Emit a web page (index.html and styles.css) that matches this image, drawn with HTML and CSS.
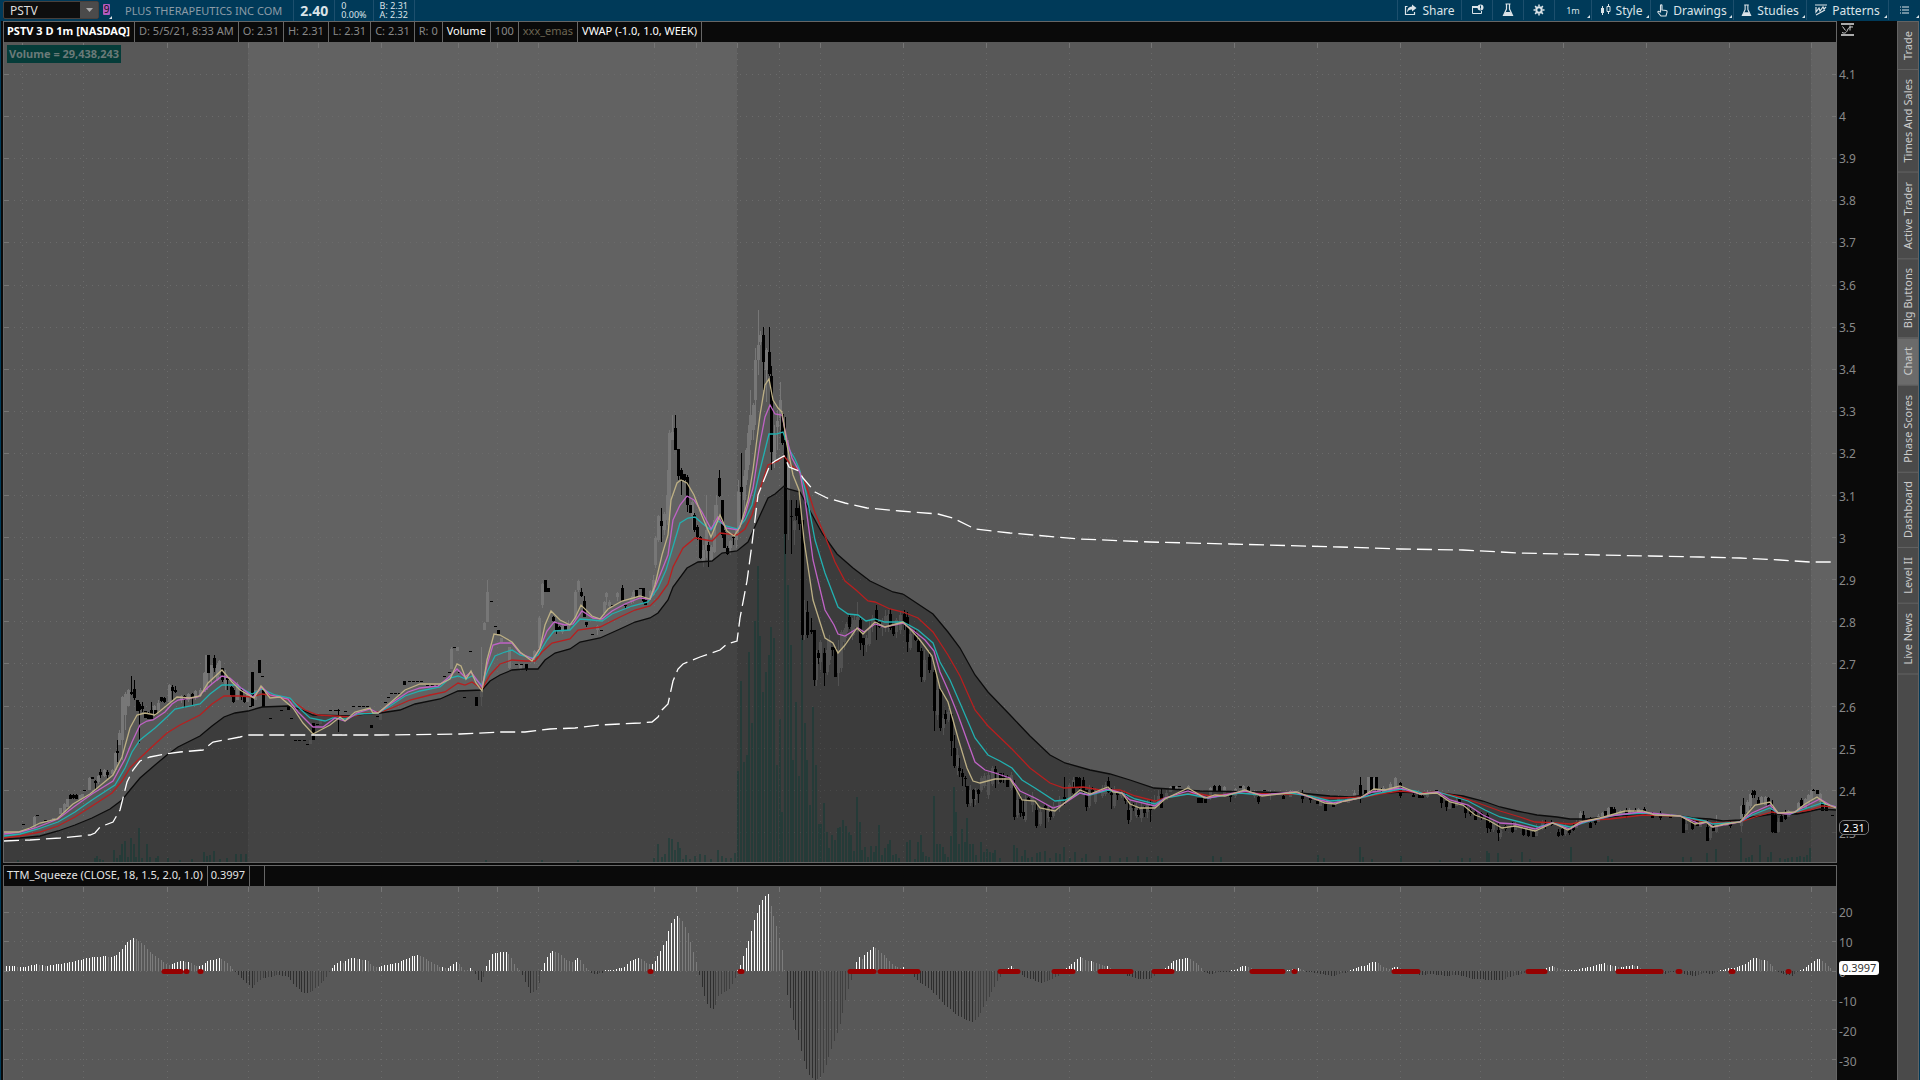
FILE: index.html
```html
<!DOCTYPE html>
<html lang="en">
<head>
    <meta charset="UTF-8">
    <meta name="viewport" content="width=device-width, initial-scale=1.0">
    <title>PSTV - Charts</title>
    <link rel="stylesheet" href="styles.css">
</head>
<body>
    <header class="toolbar">
        <div class="symbol">
            <input class="symbol-input" type="text" value="PSTV" aria-label="Symbol">
            <button class="symbol-drop" aria-label="Recent symbols"><svg width="7" height="4" viewBox="0 0 7 4"><path d="M0 0h7L3.500 4z" fill="#aaa"/></svg></button>
        </div>
        <button class="link-badge corner" aria-label="Link color"><span>9</span></button>
        <div class="quote company">PLUS THERAPEUTICS INC COM</div>
        <div class="quote last">2.40</div>
        <div class="quote change"><span>0</span><span>0.00%</span></div>
        <div class="quote bidask"><span>B: 2.31</span><span>A: 2.32</span></div>
        <nav class="tools">
            <button class="tool share">
                <svg width="13" height="12" viewBox="0 0 13 12"><path d="M3.500 2.500H1.500v8h9V8" fill="none" stroke="#dbe3e8" stroke-width="1.200"/><path d="M8 .5 12.500 4 8 7.500V5.500C5.500 5.500 4 6.500 3 8.500 3.200 4.500 5 2.700 8 2.500z" fill="#dbe3e8"/></svg>
                Share
            </button>
            <button class="tool icon" aria-label="Detach">
                <svg width="13" height="12" viewBox="0 0 13 12"><path d="M7 2.500H1.500v7h9V7" fill="none" stroke="#dbe3e8"/><path d="M1 2h6v2H1z" fill="#dbe3e8"/><circle cx="9.500" cy="3.500" r="3" fill="#dbe3e8"/><path d="M9.500 1.500v2.500M9.500 4.500v1" stroke="#003a59"/></svg>
            </button>
            <button class="tool icon" aria-label="Edit studies">
                <svg width="12" height="14" viewBox="0 0 12 14"><path d="M3.500 1h5M4.500 1v5L1.500 12.500h9L7.500 6V1" fill="none" stroke="#dbe3e8" stroke-width="1.200"/><path d="M3.500 9h5l2 3.500h-9z" fill="#dbe3e8"/></svg>
            </button>
            <button class="tool icon" aria-label="Settings">
                <svg width="12" height="12" viewBox="0 0 12 12"><circle cx="6" cy="6" r="2.700" fill="none" stroke="#dbe3e8" stroke-width="2"/><path d="M6 .5v2M6 9.500v2M.5 6h2M9.500 6h2M2.100 2.100l1.500 1.500M8.400 8.400l1.500 1.500M9.900 2.100 8.400 3.600M3.600 8.400 2.100 9.900" stroke="#dbe3e8" stroke-width="1.500"/></svg>
            </button>
            <button class="tool timeframe corner">1m</button>
            <button class="tool style corner">
                <svg width="11" height="12" viewBox="0 0 11 12"><path d="M2.500 2v9M8.500 0v10" stroke="#dbe3e8"/><path d="M1 4h3v5H1z" fill="#dbe3e8"/><path d="M7 2.500h3v5H7z" fill="#003a59" stroke="#dbe3e8"/></svg>
                Style
            </button>
            <button class="tool drawings corner">
                <svg width="11" height="13" viewBox="0 0 11 13"><path d="M3.500 8V1.500c0-1 1.500-1 1.500 0V6l4 .5c1 .2 1.200.8 1 1.700L9 12H4L1 8.500c-.4-.8.300-1.500 1-1z" fill="none" stroke="#dbe3e8" stroke-width="1.100"/></svg>
                Drawings
            </button>
            <button class="tool studies corner">
                <svg width="11" height="13" viewBox="0 0 12 14"><path d="M3.500 1h5M4.500 1v5L1.500 12.500h9L7.500 6V1" fill="none" stroke="#dbe3e8" stroke-width="1.200"/><path d="M3.500 9h5l2 3.500h-9z" fill="#dbe3e8"/></svg>
                Studies
            </button>
            <button class="tool patterns corner">
                <svg width="12" height="12" viewBox="0 0 12 12"><path d="M0 1h12M1 11l9-5M1 3v5l3-4 1 3 3-4 1 2 2-2" fill="none" stroke="#dbe3e8" stroke-width="1.200"/></svg>
                Patterns
            </button>
            <button class="tool menu corner" aria-label="Menu">
                <svg width="9" height="8" viewBox="0 0 9 8"><path d="M0 1h1M0 4h1M0 7h1M2 1h7M2 4h7M2 7h7" stroke="#dbe3e8"/></svg>
            </button>
        </nav>
    </header>

    <div class="workspace">
        <main class="charts">
            <section class="pane price-pane">
                <div class="plot-box">
                    <div class="legend">
                        <span class="title">PSTV 3 D 1m [NASDAQ]</span>
                        <span>D: 5/5/21, 8:33 AM</span>
                        <span>O: 2.31</span>
                        <span>H: 2.31</span>
                        <span>L: 2.31</span>
                        <span>C: 2.31</span>
                        <span>R: 0</span>
                        <span class="bright">Volume</span>
                        <span>100</span>
                        <span class="emas">xxx_emas</span>
                        <span class="bright">VWAP (-1.0, 1.0, WEEK)</span>
                    </div>
                    <div class="plot">
                        <svg id="price" viewBox="4 42 1832 820" preserveAspectRatio="none" role="img" aria-label="PSTV price"></svg>
                        <div class="volume-label">Volume = 29,438,243</div>
                    </div>
                </div>
                <div class="axis">
                    <button class="axis-head" aria-label="Scale settings">
                        <svg width="13" height="13" viewBox="0 0 13 13"><path d="M0 1h13M0 12h13" stroke="#aaa" stroke-width="2"/><path d="M1 9.500c3 1.500 4.500 0 5.500-2.500S9 3.500 12 4M1.500 3.500l3 4M9 2.500v5" fill="none" stroke="#ccc"/></svg>
                    </button>
                    <div class="labels">
                        <span>4.1</span><span>4</span><span>3.9</span><span>3.8</span><span>3.7</span><span>3.6</span><span>3.5</span>
                        <span>3.4</span><span>3.3</span><span>3.2</span><span>3.1</span><span>3</span><span>2.9</span><span>2.8</span>
                        <span>2.7</span><span>2.6</span><span>2.5</span><span>2.4</span><span>2.3<b class="chip">2.31</b></span>
                    </div>
                </div>
            </section>
            <section class="pane squeeze-pane">
                <div class="plot-box">
                    <div class="legend">
                        <span class="light">TTM_Squeeze (CLOSE, 18, 1.5, 2.0, 1.0)</span>
                        <span class="light">0.3997</span>
                        <span class="empty"></span>
                    </div>
                    <div class="plot">
                        <svg id="squeeze" viewBox="4 886 1832 194" preserveAspectRatio="none" role="img" aria-label="TTM Squeeze"></svg>
                    </div>
                </div>
                <div class="axis">
                    <div class="axis-head"></div>
                    <div class="labels">
                        <span>20</span><span>10</span><span>0<b class="chip white">0.3997</b></span><span>-10</span><span>-20</span><span>-30</span>
                    </div>
                </div>
            </section>
        </main>
        <nav class="tabs">
            <button>Trade</button>
            <button>Times And Sales</button>
            <button>Active Trader</button>
            <button>Big Buttons</button>
            <button class="active">Chart</button>
            <button>Phase Scores</button>
            <button>Dashboard</button>
            <button>Level II</button>
            <button>Live News</button>
        </nav>
    </div>
    <script src="chart.js"></script>
</body>
</html>
```
FILE: styles.css
```css
* {
    box-sizing: border-box;
}

body {
    margin: 0;
    height: 100vh;
    display: flex;
    flex-direction: column;
    background: #0a0a0a;
    color: #888;
    font-family: "Noto Sans", "Open Sans", sans-serif;
    font-size: 11px;
    overflow: hidden;
}

button {
    margin: 0;
    padding: 0;
    border: 0;
    background: none;
    color: inherit;
    font: inherit;
}

/* top toolbar */
.toolbar {
    flex: none;
    height: 21px;
    display: flex;
    background: #003a59;
    color: #dbe3e8;
    white-space: nowrap;
}

.symbol {
    display: flex;
    width: 96px;
    height: 18px;
    margin: 1px 0 0 3px;
    border: 1px solid #47403c;
    border-radius: 2px;
    background: #0e0e0e;
}

.symbol-input {
    flex: 1;
    min-width: 0;
    padding: 0 6px;
    border: 0;
    background: none;
    color: #ddd;
    font: inherit;
    font-size: 12px;
}

.symbol-drop {
    width: 18px;
    background: #4b4b4b;
    display: flex;
    align-items: center;
    justify-content: center;
}

.corner {
    position: relative;
}

.corner::after {
    content: "";
    position: absolute;
    right: 1px;
    bottom: 2px;
    border-left: 3px solid transparent;
    border-bottom: 3px solid #dbe3e8;
}

.link-badge {
    width: 14px;
    padding: 0 3px 3px 4px;
    color: #111;
    font-size: 10px;
    line-height: 11px;
}

.link-badge span {
    display: block;
    border-radius: 1px;
    background: #b05ac0;
}

.quote {
    display: flex;
    flex-direction: column;
    justify-content: center;
    padding: 0 6px 1px;
    border-right: 1px solid #1d4f6d;
}

.company {
    padding: 0 11px 1px 12px;
    color: #8b9ba6;
}

.last {
    font-size: 14px;
    font-weight: bold;
}

.change,
.bidask {
    font-size: 9px;
    line-height: 9px;
}

.tools {
    display: flex;
    margin-left: auto;
    padding-bottom: 1px;
    font-size: 12px;
}

.tool {
    display: flex;
    align-items: center;
    justify-content: center;
    gap: 5px;
    border-left: 1px solid #1d4f6d;
}

.share { width: 64px; }
.icon { width: 31px; }
.timeframe { width: 37px; font-size: 9px; }
.style { width: 59px; }
.drawings { width: 83px; }
.studies { width: 73px; }
.patterns { width: 82px; }
.menu { width: 32px; }

/* charts */
.workspace {
    flex: 1;
    min-height: 0;
    display: flex;
    border: 0 solid #003a59;
    border-width: 0 1px;
}

.charts {
    flex: 1;
    min-width: 0;
    display: flex;
    flex-direction: column;
    padding-left: 2px;
}

.pane {
    display: flex;
    min-height: 0;
}

.price-pane {
    flex: 843;
}

.squeeze-pane {
    flex: 216;
}

.plot-box {
    flex: 1;
    min-width: 0;
    display: flex;
    flex-direction: column;
    border: 1px solid #666;
}

.price-pane .plot-box {
    margin-bottom: 1px;
}

.squeeze-pane .plot-box {
    margin-top: 1px;
    border-bottom: 0;
}

.legend {
    flex: none;
    display: flex;
    height: 20px;
    background: #0a0a0a;
    line-height: 18px;
    white-space: nowrap;
}

.legend span {
    padding: 0 4px;
    border-right: 1px solid #666;
}

.legend .title {
    padding: 0 4px 0 3px;
    color: #fff;
    font-weight: bold;
}

.legend .bright {
    color: #fff;
}

.legend .light {
    padding: 0 4px 0 3px;
    color: #e4e4e4;
}

.legend .emas {
    color: #6c6653;
}

.legend .empty {
    width: 15px;
}

.plot {
    flex: 1;
    min-height: 0;
    position: relative;
    background: #585858;
}

.plot svg {
    display: block;
    width: 100%;
    height: 100%;
}

.volume-label {
    position: absolute;
    left: 3px;
    top: 3px;
    padding: 0 2px;
    background: #053c39;
    color: #6a7a78;
    font-weight: bold;
    line-height: 18px;
}

.axis {
    flex: none;
    width: 60px;
    display: flex;
    flex-direction: column;
    font-size: 12px;
}

.axis-head {
    flex: none;
    height: 21px;
    padding-left: 4px;
    display: flex;
    align-items: flex-start;
}

.axis-head svg {
    margin-top: 2px;
}

.labels {
    flex: 1;
    display: flex;
    flex-direction: column;
    padding: 11px 0 9px 2px;
}

.squeeze-pane .labels {
    padding: 13px 0 4px 2px;
}

.labels span {
    flex: 1;
    display: flex;
    align-items: center;
    position: relative;
}

.chip {
    position: absolute;
    left: 0;
    top: 7px;
    padding: 0 3px;
    border: 1px solid #777;
    border-radius: 5px;
    background: #0a0a0a;
    color: #fff;
    font-size: 11px;
    font-weight: normal;
    line-height: 13px;
}

.chip.white {
    top: 4px;
    border: 0;
    border-radius: 3px;
    background: #fff;
    color: #333;
    line-height: 14px;
}

/* right side gadgets */
.tabs {
    flex: none;
    width: 22px;
    display: flex;
    flex-direction: column;
    border: 1px solid #636363;
    border-bottom: 0;
    background: #4a4a4a;
    color: #ccc;
    font-size: 11px;
}

.tabs button {
    writing-mode: vertical-rl;
    transform: rotate(180deg);
    padding: 9px 0;
    border-top: 1px solid #636363;
    line-height: 20px;
}

.tabs .active {
    background: #6b6b6b;
}

/* drawing */
.session { fill: #626262; }
.grid { stroke: #6b6b6b; stroke-dasharray: 1 5; }
.tick { stroke: #757575; }
.volume { fill: #04554c; fill-opacity: .4; }
.up { fill: #777; }
.down { fill: #000; }
.cloud { fill: #000; fill-opacity: .31; }
.line { fill: none; stroke-width: 1.3; }
.ema-black { stroke: #0c0c0c; }
.ema-red { stroke: #b81f1f; }
.ema-cyan { stroke: #22b0b0; }
.ema-magenta { stroke: #c063c6; }
.ema-tan { stroke: #bdb085; }
.vwap { stroke: #fff; stroke-dasharray: 15 6; }
.rise { fill: #fff; }
.fade { fill: #7c7c7c; }
.drop { fill: #2e2e2e; }
.recover { fill: #404040; }
.squeeze-dot { stroke: #960000; stroke-width: 5; stroke-linecap: round; }
```
FILE: chart.js
```js
const NS = 'http://www.w3.org/2000/svg';
const price = document.getElementById('price');
const squeeze = document.getElementById('squeeze');

const gridX = [22, 83, 167, 248, 318, 381, 458, 497, 538, 654, 696, 737, 779, 820, 903, 986, 1069,
    1151, 1234, 1317, 1400, 1480, 1563, 1646, 1729, 1811];

function add(parent, tag, cls, attrs) {
    const el = document.createElementNS(NS, tag);
    el.setAttribute('class', cls);
    for (const key in attrs) el.setAttribute(key, attrs[key]);
    parent.appendChild(el);
}

function rect(parent, cls, x, y, width, height) {
    add(parent, 'rect', cls, { x, y, width, height, 'shape-rendering': 'crispEdges' });
}

function segment(parent, cls, x1, y1, x2, y2) {
    add(parent, 'line', cls, { x1, y1, x2, y2 });
}

function drawGrid(svg, top, bottom, rows) {
    gridX.forEach(x => {
        segment(svg, 'grid', x + .5, top + 5, x + .5, bottom);
        segment(svg, 'tick', x + .5, top + 1, x + .5, top + 6);
    });
    rows.forEach(y => {
        segment(svg, 'grid', 8, y + .5, 1832, y + .5);
        segment(svg, 'tick', 4, y + .5, 9, y + .5);
        segment(svg, 'tick', 1832, y + .5, 1836, y + .5);
    });
}

// "x,y x,y ..."
const lines = {
    black: '4,839 20,838 40,836 58,831 75,825 92,818 110,809 122,800 130,790 140,778 155,765 167,755 178,747 200,736 212,726 224,717 235,713 248,711 262,707 288,706 300,709 313,715 350,716 365,714 380,713 400,710 415,704 440,699 458,691 482,690 490,681 500,675 512,670 525,669 538,669 545,660 555,653 570,649 580,642 600,638 620,629 635,622 650,618 658,613 668,600 673,587 687,568 698,562 712,561 722,553 737,551 748,542 757,522 768,498 775,494 784,486 788,489 800,492 810,511 822,533 837,554 853,568 870,581 893,592 903,594 918,604 933,614 948,632 960,648 975,675 988,692 1012,717 1030,736 1050,755 1065,763 1090,770 1110,774 1130,780 1154,788 1200,791 1260,792 1300,793 1330,796 1350,797 1373,794 1400,792 1423,793 1440,793 1463,796 1483,801 1500,807 1517,811 1537,815 1557,817 1570,819 1587,819 1607,817 1627,815 1643,815 1680,816 1693,818 1710,819 1723,821 1740,820 1753,817 1773,814 1797,814 1820,809 1836,810',
    red: '4,838 20,836 40,832 58,826 75,817 92,806 112,793 122,781 130,768 140,758 155,744 167,733 180,725 200,715 212,704 224,696 240,696 252,697 262,694 275,696 293,701 305,710 318,715 350,717 365,713 380,712 392,708 410,700 430,695 445,692 458,683 465,685 472,682 482,689 490,675 500,664 512,660 525,661 535,661 542,652 552,643 570,639 578,630 600,627 620,617 635,610 650,606 658,598 668,584 673,567 683,548 695,538 712,541 720,533 737,535 745,529 752,515 760,489 768,465 778,461 784,456 792,466 800,471 806,485 815,513 825,536 835,562 845,581 856,590 868,601 875,602 890,609 903,612 918,618 933,632 948,655 960,676 975,710 988,726 1012,749 1030,768 1050,783 1064,788 1083,787 1100,790 1120,790 1135,796 1155,801 1165,798 1180,795 1195,793 1210,796 1240,793 1275,794 1300,794 1320,798 1340,798 1365,797 1380,794 1400,791 1425,793 1437,792 1460,797 1478,803 1500,811 1520,817 1535,822 1557,823 1571,824 1590,820 1610,819 1643,815 1680,816 1700,821 1712,823 1740,822 1755,817 1772,812 1785,814 1810,810 1822,806 1836,807',
    cyan: '4,836 20,834 38,829 58,822 75,812 92,800 115,785 125,768 132,752 140,740 155,728 167,717 175,709 200,704 210,694 222,685 235,685 252,694 262,689 275,695 290,698 298,707 310,718 325,721 333,718 345,719 358,714 378,713 390,706 405,696 420,691 440,687 450,678 458,676 466,679 472,676 482,685 488,670 495,656 505,652 512,650 520,655 532,658 538,655 547,640 554,631 570,630 580,619 592,620 602,621 612,614 632,606 648,602 658,588 666,570 672,550 680,523 688,518 695,517 703,524 711,530 718,521 726,526 737,529 745,520 752,505 760,470 769,434 776,434 783,432 789,449 795,459 800,471 806,492 815,540 825,573 838,607 848,614 858,615 866,621 875,619 885,622 903,622 918,630 933,643 940,662 950,680 960,703 975,738 988,755 1000,761 1012,768 1022,780 1035,788 1055,801 1065,800 1080,793 1090,795 1108,790 1125,794 1135,799 1155,804 1165,798 1188,794 1208,798 1240,793 1262,795 1290,793 1310,796 1330,801 1345,800 1360,798 1375,794 1400,789 1415,791 1425,794 1438,792 1455,797 1468,801 1485,810 1500,817 1520,822 1538,827 1552,823 1570,827 1590,821 1615,815 1643,813 1680,816 1705,821 1713,824 1740,822 1752,815 1770,808 1778,813 1790,814 1810,807 1822,803 1836,807',
    magenta: '4,834 20,832 35,828 58,819 75,806 92,794 113,781 125,759 132,742 140,725 147,721 153,720 165,712 172,704 178,700 198,697 205,690 213,683 222,676 230,678 240,687 253,697 262,687 270,695 288,699 298,712 313,727 323,727 335,718 345,721 357,713 370,709 378,713 390,704 408,692 420,688 438,686 448,678 457,669 465,677 471,672 482,687 487,665 493,645 500,643 512,643 520,653 533,659 540,648 547,631 554,622 565,625 573,624 582,611 593,618 602,619 612,611 625,604 640,598 650,599 658,580 668,555 673,520 680,505 687,496 694,500 702,512 711,529 718,517 726,528 738,530 745,515 753,488 760,443 765,417 770,405 775,414 782,415 787,440 792,458 800,473 805,500 813,560 825,610 834,625 838,634 845,636 858,628 864,632 875,624 885,627 903,623 915,632 925,640 934,651 940,672 948,690 958,715 967,740 975,762 985,770 995,773 1010,778 1020,791 1035,798 1053,808 1062,805 1080,793 1088,795 1108,789 1122,793 1130,800 1155,806 1165,798 1188,791 1208,798 1245,791 1262,795 1295,792 1315,799 1333,803 1345,801 1360,798 1372,792 1400,788 1420,794 1438,792 1450,800 1468,805 1483,815 1500,823 1515,824 1535,829 1552,823 1570,829 1583,822 1610,816 1640,812 1680,816 1700,824 1707,822 1713,827 1740,822 1752,813 1770,805 1778,813 1790,814 1810,804 1820,799 1830,805 1836,807',
    tan: '4,832 18,832 30,828 40,823 57,819 73,804 90,794 113,775 122,757 130,728 137,715 145,713 155,715 165,707 177,697 190,698 200,696 208,683 222,670 232,682 240,690 254,698 261,686 270,698 280,697 293,708 303,723 313,734 330,725 340,717 345,721 355,712 370,708 373,713 378,713 390,703 405,690 420,684 440,684 450,679 457,664 461,666 466,679 471,671 476,683 482,691 487,660 494,634 500,635 512,642 520,652 532,661 540,648 545,625 551,611 560,620 570,625 575,618 581,605 592,616 600,619 608,609 622,601 640,596 650,599 655,585 662,555 668,535 671,500 677,483 681,480 687,483 694,495 702,516 711,537 720,515 727,531 734,536 740,527 748,500 753,470 760,415 765,385 769,379 773,400 778,408 782,412 787,445 793,475 799,490 804,540 813,600 825,638 833,643 838,653 845,645 857,628 863,634 875,622 885,627 903,622 912,631 920,640 932,656 940,688 948,702 958,738 967,768 973,781 980,783 995,779 1010,779 1015,787 1022,800 1035,801 1040,808 1055,811 1062,805 1073,796 1080,790 1090,794 1108,787 1113,792 1122,793 1130,804 1140,808 1155,808 1165,799 1188,788 1205,798 1215,795 1225,796 1245,790 1262,796 1297,792 1310,797 1325,803 1335,804 1345,801 1360,798 1374,789 1385,790 1400,786 1405,788 1420,794 1437,793 1450,802 1463,805 1475,815 1488,820 1502,828 1515,826 1535,831 1553,823 1568,830 1580,822 1600,818 1625,811 1643,811 1655,815 1680,816 1695,824 1706,822 1712,827 1725,824 1740,822 1748,813 1755,805 1770,802 1778,813 1795,812 1805,804 1817,797 1826,804 1836,808'
};

const vwap = '4,841 30,840 60,838 90,835 95,833 100,827 113,822 120,810 127,782 133,770 140,761 150,757 165,754 180,752 203,750 213,742 240,737 248,735 380,735 460,734 500,732 525,732 550,729 575,728 600,725 640,723 652,722 658,717 662,710 668,704 673,681 678,669 683,664 700,657 720,650 727,644 737,641 740,618 747,581 752,544 758,495 766,475 770,465 775,461 784,456 789,467 799,471 803,478 815,492 827,498 845,503 867,508 900,511 938,514 953,518 975,529 1010,533 1080,539 1150,542 1230,544 1340,547 1400,549 1463,550 1520,553 1600,555 1650,556 1700,557 1740,558 1780,560 1810,562 1832,562';

// x,high,open/close top,open/close bottom,low
const down = '23,824,824,825,825 29,828,828,829,829 37,815,815,816,816 45,820,820,821,821 50,820,820,821,821 70,794,795,799,799 73,794,795,798,799 76,794,795,799,799 84,790,790,791,791 92,777,777,779,779 95,780,781,783,790 100,769,772,775,778 107,770,772,775,778 117,740,751,753,762 131,676,692,694,695 134,680,689,698,700 137,700,700,711,711 139,702,704,710,743 142,702,706,709,712 145,711,711,718,718 148,712,713,719,719 151,702,710,719,719 155,710,710,715,716 161,697,697,701,702 164,697,698,702,703 172,685,687,691,700 175,686,690,692,693 184,695,696,700,708 192,693,694,697,705 208,655,655,673,673 214,655,658,668,672 222,668,668,680,682 227,676,678,680,690 231,686,687,695,697 233,688,690,702,703 241,687,690,697,700 244,697,697,702,703 252,672,672,706,706 259,660,660,673,673 262,676,676,677,677 263,690,690,707,707 250,706,706,707,707 270,718,718,719,719 281,710,710,711,711 288,706,706,710,710 291,718,718,719,719 295,740,740,741,741 299,740,740,741,741 304,740,740,741,741 307,744,744,745,745 313,723,723,740,740 317,724,724,725,725 330,710,710,711,711 335,710,710,711,711 338,709,710,711,732 343,734,734,735,735 345,711,711,712,712 353,706,706,707,707 359,706,706,707,707 363,706,706,707,707 367,706,706,707,707 371,725,725,728,728 377,716,716,717,717 385,702,702,703,703 388,697,697,698,698 391,693,693,694,694 395,693,693,694,694 399,693,693,694,694 404,681,681,685,685 409,681,681,682,682 413,681,681,682,682 417,681,681,682,682 421,681,681,682,682 427,685,685,686,686 432,685,685,686,686 437,685,685,686,686 444,676,676,677,677 449,672,672,673,673 454,647,647,648,648 459,672,672,673,673 464,697,697,698,698 470,651,651,652,652 476,697,697,706,706 491,601,601,602,602 495,626,626,627,627 498,630,630,634,634 516,664,664,665,665 521,664,664,665,665 526,664,664,669,671 545,580,580,592,592 548,588,588,592,592 553,616,617,621,622 556,622,622,630,634 559,626,627,630,631 565,626,626,630,630 581,588,592,596,597 584,596,601,617,617 586,622,622,625,627 592,634,634,635,635 601,630,630,631,631 612,605,605,606,606 622,585,588,601,601 625,605,605,606,609 636,590,590,597,597 640,588,588,589,589 643,588,588,601,603 645,600,600,605,605 661,508,521,526,542 675,415,428,450,450 678,449,449,476,480 681,468,470,480,495 684,474,474,480,481 687,475,477,505,512 690,505,505,513,513 694,513,515,530,532 697,525,527,537,540 700,536,537,558,559 708,542,545,551,567 719,470,478,496,497 722,500,500,535,538 724,530,532,548,548 727,546,548,554,555 733,535,537,538,545 741,453,487,492,520 763,327,335,362,390 769,327,352,374,376 771,366,376,452,470 782,412,414,443,445 785,417,440,534,554 791,500,516,517,554 796,500,508,516,520 799,500,508,524,530 802,520,520,635,640 807,601,612,635,638 811,618,630,632,634 814,630,630,680,686 818,650,653,658,664 824,648,653,673,686 832,647,647,650,656 835,648,648,677,677 849,615,617,627,629 860,618,620,643,650 863,638,638,645,656 876,605,610,622,640 879,622,622,627,628 890,609,614,628,630 893,625,626,634,636 904,610,614,623,630 907,612,617,642,652 915,630,632,640,641 918,637,641,652,652 921,648,651,677,682 929,651,657,670,673 934,670,672,711,731 940,688,689,728,731 945,710,714,719,724 951,714,714,741,756 954,735,748,766,768 959,758,768,771,777 962,769,773,777,786 965,776,778,779,787 967,786,786,804,807 973,789,790,799,807 978,789,790,794,803 995,766,769,772,788 1000,773,773,782,783 1003,773,777,778,783 1007,775,778,787,787 1014,780,785,817,820 1020,795,799,813,817 1023,800,812,816,819 1028,797,798,800,801 1036,803,810,826,828 1045,804,806,810,828 1050,808,812,817,820 1064,777,797,799,805 1073,782,787,793,794 1076,777,777,787,788 1079,777,778,788,789 1083,777,780,792,793 1086,790,790,807,811 1092,787,790,794,794 1108,777,781,792,793 1111,788,793,795,809 1117,792,793,795,800 1125,792,795,801,804 1128,800,810,820,824 1133,803,805,808,811 1138,807,810,815,817 1144,806,808,813,817 1150,800,806,810,822 1161,789,794,808,808 1173,786,786,789,789 1179,786,786,787,787 1198,798,798,803,803 1201,798,798,803,803 1205,797,798,803,803 1214,785,786,791,791 1219,785,786,791,791 1230,794,794,797,802 1240,786,786,788,788 1248,786,787,791,791 1258,795,797,802,804 1264,790,790,791,791 1283,795,796,799,799 1302,790,796,799,803 1310,798,798,800,803 1317,800,801,804,804 1325,800,804,811,811 1333,803,804,807,807 1341,800,800,803,803 1360,777,785,796,803 1365,790,790,797,797 1371,777,777,792,792 1376,777,777,790,792 1381,788,789,791,793 1400,782,783,796,798 1406,788,789,793,793 1413,793,795,797,797 1419,793,794,798,798 1422,795,796,798,798 1436,790,790,791,791 1441,797,797,803,808 1446,801,801,807,811 1453,802,803,808,808 1459,798,799,803,804 1465,805,805,813,818 1470,808,810,814,816 1475,810,812,820,820 1481,812,813,818,820 1487,813,815,828,833 1490,822,823,829,832 1498,822,830,833,841 1505,825,826,829,831 1512,822,826,832,833 1523,826,828,835,836 1528,828,830,836,837 1533,830,832,837,837 1545,820,824,826,829 1551,820,822,825,826 1558,829,832,836,837 1562,827,829,835,836 1569,828,829,833,835 1573,824,826,830,831 1583,811,815,820,820 1590,817,823,828,828 1595,818,820,823,825 1605,811,811,817,817 1611,807,807,815,815 1614,807,809,816,816 1626,808,810,816,818 1635,808,810,814,814 1644,807,809,815,815 1652,812,813,818,818 1660,811,813,818,820 1670,814,815,818,818 1683,816,818,833,833 1692,818,820,829,830 1697,820,821,826,826 1707,820,827,841,841 1713,824,826,831,831 1722,822,823,826,826 1730,820,822,826,828 1743,798,805,814,818 1752,790,793,795,798 1754,790,791,795,798 1758,797,800,804,804 1768,797,798,806,806 1772,800,810,832,833 1775,813,815,833,833 1781,815,816,822,822 1785,810,814,819,820 1795,812,812,814,814 1801,798,800,806,806 1813,789,790,791,791 1817,790,790,794,794 1822,800,802,811,811 1826,805,805,811,811 1832,815,815,816,816';
const up = '34,816,817,827,828 53,818,818,821,821 60,808,808,814,814 64,803,804,812,812 67,799,799,807,807 80,795,795,800,800 82,794,794,798,798 89,777,778,790,790 98,775,776,782,784 104,769,770,776,777 112,769,770,774,775 115,752,753,770,770 119,730,733,745,745 122,696,697,740,760 125,692,694,715,730 128,689,690,706,706 154,705,706,716,716 158,700,703,710,711 169,684,685,702,702 181,695,696,700,703 188,693,694,700,702 195,690,691,698,700 200,688,690,696,697 204,672,673,692,692 206,655,655,690,690 211,665,665,680,685 217,663,665,680,681 219,660,661,672,675 225,670,675,684,690 237,682,684,700,700 247,692,694,702,702 255,690,690,700,700 310,740,740,744,744 320,720,720,724,724 380,714,714,720,720 451,647,649,669,669 457,647,647,651,651 481,647,690,697,706 484,622,623,630,630 487,580,592,622,622 501,638,638,642,642 509,647,647,668,669 520,664,664,670,671 534,650,651,658,664 539,616,618,648,650 542,583,584,605,608 562,624,626,632,634 568,620,624,630,630 575,590,592,618,620 578,580,581,590,592 597,625,626,630,635 604,601,602,613,615 606,592,593,597,605 609,600,602,606,608 617,592,593,597,601 631,596,598,602,604 633,590,592,600,603 650,590,591,598,600 653,575,580,595,596 655,536,538,565,568 658,515,516,540,542 664,512,514,530,535 667,470,495,520,525 669,430,433,510,515 672,415,432,440,440 692,500,502,516,530 703,545,550,562,567 706,495,530,550,558 711,545,547,560,562 714,505,520,552,553 716,495,505,520,525 730,540,541,548,555 736,528,530,540,548 738,480,492,528,535 744,470,476,500,510 746,448,450,480,485 748,425,433,465,470 750,390,415,440,445 753,403,405,430,440 755,348,360,400,425 758,310,345,360,375 760,331,335,342,345 766,348,350,370,402 774,425,435,460,468 777,410,421,427,450 780,382,400,418,430 788,440,460,500,540 794,520,521,530,545 804,600,610,635,640 816,650,655,680,686 820,640,642,662,670 827,640,650,672,675 829,635,640,660,665 838,640,650,673,686 841,630,632,668,672 844,628,630,642,650 846,622,624,632,638 852,618,624,636,640 854,615,620,627,635 857,602,617,627,632 866,635,638,645,652 869,620,628,644,646 872,615,618,626,632 882,618,622,628,636 885,610,616,627,632 888,610,615,625,632 896,618,620,632,638 900,612,615,630,634 910,628,634,648,650 924,650,660,680,682 937,680,690,715,720 943,715,718,728,735 948,708,712,720,722 957,748,755,766,775 970,785,790,803,806 975,788,792,800,805 981,776,778,790,792 984,773,776,786,788 988,772,775,795,799 992,766,768,784,786 998,772,774,780,784 1011,772,775,788,790 1017,790,800,815,818 1025,795,800,820,822 1032,792,796,805,812 1040,806,812,824,826 1048,806,810,818,822 1053,802,806,816,818 1059,796,800,808,812 1069,783,785,798,800 1073,777,780,790,794 1089,785,792,806,808 1095,788,792,802,804 1102,785,788,796,798 1105,782,785,794,796 1114,786,792,806,808 1121,790,792,796,798 1130,800,808,820,822 1136,802,806,816,818 1141,802,808,818,822 1147,800,804,812,818 1154,795,800,808,810 1158,790,796,804,806 1166,790,793,800,800 1170,786,787,792,792 1176,786,787,790,790 1188,785,786,790,790 1210,787,788,798,800 1224,786,787,794,794 1235,788,789,796,798 1243,785,786,791,791 1254,790,792,796,798 1270,790,792,795,800 1290,790,791,797,797 1320,798,800,806,806 1338,795,798,803,803 1348,796,797,803,803 1354,790,793,800,800 1368,777,777,792,792 1374,777,778,790,790 1383,786,788,792,792 1390,782,784,793,793 1395,777,778,790,790 1427,790,792,797,798 1449,800,803,809,809 1456,798,800,806,806 1493,820,822,830,832 1500,828,830,837,839 1515,822,824,830,830 1536,824,830,836,836 1542,820,822,829,830 1565,824,828,834,836 1576,820,822,828,828 1580,811,813,821,821 1598,814,816,822,822 1602,812,813,819,819 1608,807,808,816,816 1620,810,811,817,817 1629,808,810,815,815 1638,808,809,815,815 1686,820,824,830,830 1700,820,821,827,827 1710,825,828,838,840 1716,815,822,832,833 1726,820,821,826,826 1741,805,806,826,832 1747,800,802,812,816 1750,793,794,806,808 1761,796,797,804,804 1765,796,797,805,805 1778,818,822,832,832 1788,810,811,817,817 1798,802,803,812,812 1805,798,799,808,808 1808,794,795,804,804 1811,790,790,800,800 1820,793,794,802,804';

// x,height
const volume = '18,2 53,1 95,4 97,6 100,3 103,2 114,12 117,4 120,7 122,18 125,21 128,5 131,24 134,18 136,5 139,34 142,4 147,18 150,5 156,4 158,6 168,4 180,2 192,3 204,10 207,6 210,7 214,11 220,3 227,4 236,8 241,8 246,8 486,2 542,2 578,2 654,4 658,18 662,5 665,8 669,24 672,23 675,12 678,20 680,14 683,3 686,7 690,3 695,6 700,8 705,7 711,3 718,12 722,6 726,4 731,4 735,9 738,91 741,181 744,100 747,107 749,210 752,139 755,241 758,296 760,226 763,170 766,190 769,207 771,235 774,224 777,97 780,143 782,50 785,330 788,277 791,217 793,102 796,160 799,86 802,224 805,139 807,102 810,57 813,155 816,97 819,38 821,38 824,59 827,30 829,14 832,27 835,22 838,34 840,35 843,42 846,36 849,30 851,27 854,11 857,65 860,40 862,12 865,15 868,5 871,16 874,10 876,16 879,37 882,7 885,14 888,18 890,22 893,7 896,8 899,4 907,20 910,22 915,3 918,20 921,27 923,10 926,6 929,5 934,66 937,18 940,18 943,15 945,8 948,5 951,26 954,75 956,50 959,18 962,33 965,20 967,44 970,18 973,18 976,7 981,20 984,10 987,13 990,10 993,9 995,12 1000,4 1014,17 1017,14 1022,6 1025,12 1028,4 1032,5 1037,9 1040,10 1045,11 1050,4 1056,9 1060,8 1064,15 1070,4 1075,10 1082,4 1086,8 1100,6 1110,6 1120,4 1127,5 1138,6 1147,5 1158,6 1162,4 1213,6 1221,5 1318,7 1324,4 1360,15 1363,5 1372,3 1401,6 1440,2 1462,4 1470,4 1487,11 1489,9 1498,9 1511,3 1522,10 1530,3 1571,15 1608,6 1612,3 1683,5 1691,5 1707,9 1716,13 1741,24 1746,4 1749,5 1752,7 1760,17 1768,5 1771,10 1780,4 1785,3 1788,4 1792,5 1797,5 1800,6 1804,5 1807,7 1810,14';

// x,momentum
const momentum = '6,5 12,5 18,4 24,4 28,5 36,7 46,5 50,6 65,8 75,10 91,14 100,14 104,15 110,14 116,16 122,22 128,30 133,33 139,30 144,26 150,18 160,12 165,7 168,6 172,7 180,10 188,9 198,4 203,7 208,10 219,13 225,10 230,5 234,0 242,-8 252,-17 258,-10 263,-7 270,-6 277,-4 288,-6 294,-14 303,-22 311,-21 318,-15 324,-9 328,-3 331,2 335,7 340,10 343,8 347,12 353,13 360,12 368,10 372,5 378,4 385,6 397,8 404,11 412,15 418,16 424,13 432,8 440,4 448,3 456,9 460,6 463,2 466,-1 470,3 474,-1 478,-9 481,-11 485,-3 486,4 489,11 492,17 500,19 507,19 511,13 515,5 518,2 521,-1 525,-11 528,-17 531,-23 536,-19 539,-11 541,0 544,8 547,14 551,20 554,20 558,18 565,12 572,9 575,11 577,13 580,11 584,5 587,1 590,-1 592,-3 602,-2 606,1 612,1 616,2 624,4 630,10 634,12 639,13 645,9 650,6 653,8 656,12 662,24 666,31 670,46 675,54 678,55 682,50 688,37 693,20 696,9 699,-5 702,-18 707,-33 711,-39 714,-38 718,-25 724,-21 728,-20 733,-11 737,-1 740,5 743,15 749,32 754,51 760,67 766,77 768,77 771,63 777,41 782,19 785,-5 787,-24 793,-51 798,-68 802,-85 808,-103 814,-109 819,-107 823,-102 829,-85 836,-64 840,-52 845,-29 849,-13 852,-5 854,4 858,14 862,12 866,18 873,24 878,21 886,14 892,7 896,4 901,3 903,4 906,1 912,-4 920,-12 928,-17 936,-24 944,-34 952,-40 960,-46 967,-49 973,-51 979,-45 986,-30 992,-20 998,-8 1003,-1 1006,1 1011,5 1014,3 1018,0 1021,-4 1026,-7 1032,-8 1036,-10 1040,-12 1048,-10 1055,-6 1062,-2 1066,3 1072,7 1076,11 1080,14 1083,13 1086,10 1089,10 1095,9 1100,6 1108,5 1113,1 1120,-1 1127,-5 1132,-6 1138,-8 1150,-8 1156,-3 1161,1 1167,4 1172,10 1180,12 1186,13 1190,12 1196,8 1202,2 1204,-1 1210,-3 1220,-1 1230,-1 1235,1 1240,4 1244,5 1248,4 1255,1 1290,1 1298,3 1302,2 1306,-1 1311,-1 1320,-3 1333,-5 1340,-3 1347,-1 1351,1 1357,4 1364,5 1370,8 1374,9 1379,7 1387,2 1396,4 1404,1 1410,-1 1415,-3 1422,-4 1432,-3 1446,-5 1457,-4 1464,-5 1472,-8 1497,-9 1502,-9 1508,-6 1518,-4 1526,-1 1540,1 1546,3 1552,5 1558,3 1564,1 1575,1 1583,3 1594,5 1600,7 1603,8 1608,6 1614,5 1618,4 1624,4 1631,6 1636,5 1643,2 1650,0 1658,-2 1665,-3 1672,-1 1680,-2 1688,-4 1696,-5 1704,-2 1713,-3 1718,-1 1722,1 1728,3 1735,3 1742,6 1748,9 1754,14 1760,11 1766,11 1773,4 1777,-1 1782,-3 1792,-5 1797,-1 1801,1 1806,4 1812,9 1818,13 1823,9 1828,5 1832,1';

const squeezeRuns = [[164, 181], [186, 187], [200, 201], [650, 651], [740, 742], [850, 874], [880, 918], [1000, 1018],
    [1054, 1073], [1100, 1131], [1154, 1172], [1252, 1283], [1294, 1295], [1394, 1418], [1528, 1545],
    [1618, 1661], [1678, 1680], [1731, 1733], [1788, 1789]];

function parse(text) {
    return text.split(' ').map(item => item.split(',').map(Number));
}

function drawCandles(text, cls) {
    parse(text).forEach(([x, high, top, bottom, low]) => {
        rect(price, cls, x, high, 1, Math.max(1, low - high));
        rect(price, cls, x - 1, top, 3, Math.max(1, bottom - top));
    });
}

function drawPrice() {
    rect(price, 'session', 248, 42, 489, 820);
    rect(price, 'session', 1811, 42, 25, 820);
    const rows = [];
    for (let i = 0; i < 19; i++) rows.push(Math.round(74 + i * 42.1));
    drawGrid(price, 42, 862, rows);
    parse(volume).forEach(([x, h]) => rect(price, 'volume', x - 1, 862 - h, 2, h));
    drawCandles(up, 'up');
    drawCandles(down, 'down');
    add(price, 'polygon', 'cloud', { points: '4,862 ' + lines.black + ' 1836,862' });
    for (const name in lines) {
        add(price, 'polyline', 'line ema-' + name, { points: lines[name] });
    }
    add(price, 'polyline', 'line vwap', { points: vwap });
}

function drawSqueeze() {
    drawGrid(squeeze, 886, 1080, [912, 941, 971, 1000, 1029, 1059]);
    const points = parse(momentum);
    let index = 0;
    let last = 0;
    for (let x = 6; x < 1832; x += 2.76) {
        while (index < points.length - 2 && points[index + 1][0] < x) index++;
        const [x1, v1] = points[index];
        const [x2, v2] = points[index + 1];
        const value = Math.round(v1 + (v2 - v1) * (x - x1) / (x2 - x1));
        const height = Math.max(1, Math.abs(value));
        if (value >= 0) {
            rect(squeeze, value >= last ? 'rise' : 'fade', Math.round(x), 971 - height, 1, height);
        } else {
            rect(squeeze, value <= last ? 'drop' : 'recover', Math.round(x), 971, 1, height);
        }
        last = value;
    }
    squeezeRuns.forEach(([from, to]) => segment(squeeze, 'squeeze-dot', from, 971.5, to, 971.5));
}

drawPrice();
drawSqueeze();
```
